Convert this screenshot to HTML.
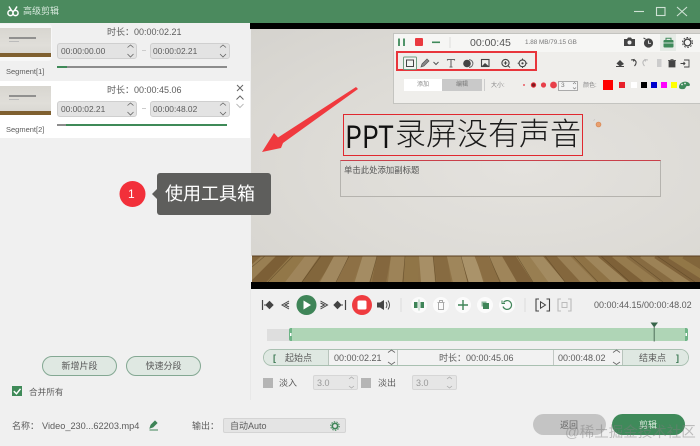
<!DOCTYPE html>
<html lang="zh"><head><meta charset="utf-8"><title>高级剪辑</title>
<style>
html,body{margin:0;padding:0}
body{width:700px;height:446px;position:relative;overflow:hidden;background:#f0f0f0;font-family:"Liberation Sans","Noto Sans CJK SC",sans-serif;color:#555}
.a{position:absolute;box-sizing:border-box}
.t{position:absolute;white-space:nowrap;line-height:12px;font-size:9px;color:#5c5c5c}
.inp{position:absolute;box-sizing:border-box;background:#e3e3e3;border:1px solid #cfcfcf;border-radius:3px;height:16px;width:80px}
.thumb{position:absolute;left:0;width:51px;height:29px;background:linear-gradient(#d8d6d0 0,#e0ded9 60%,#dad8d3 86%,#7e5f30 86%,#80602f 100%);overflow:hidden}
.thumb i{position:absolute;left:9px;top:9px;width:27px;height:2px;background:#777;opacity:.75}
.thumb b{position:absolute;left:9px;top:13px;width:10px;height:1px;background:#bbb}
.btn{position:absolute;box-sizing:border-box;height:20px;width:75px;top:356px;border:1px solid #84a893;border-radius:10px;background:#dfe8e2;font-size:9px;line-height:18px;text-align:center;color:#555;font-weight:400}
svg{position:absolute;left:0;top:0}
</style></head><body>

<div class="a" style="left:0;top:0;width:700px;height:23px;background:#4b8a5e"></div>
<div class="t" style="left:23px;top:5px;color:#d9eadf;font-size:9px">高级剪辑</div>

<!-- left segments -->
<div class="a" style="left:0;top:24px;width:52px;height:37px;background:#f7f7f7;border-radius:0 4px 4px 0"></div>
<div class="a" style="left:0;top:81px;width:250px;height:57px;background:#fff"></div>
<div class="thumb" style="top:28px"><i></i><b></b></div>
<div class="thumb" style="top:86px"><i></i><b></b></div>
<div class="t" style="left:6px;top:66px;font-size:7.5px">Segment[1]</div>
<div class="t" style="left:6px;top:124px;font-size:7.5px">Segment[2]</div>
<div class="t" style="left:107px;top:26px;font-size:9px">时长：00:00:02.21</div>
<div class="t" style="left:107px;top:84px;font-size:9px">时长：00:00:45.06</div>
<div class="inp" style="left:57px;top:43px"></div><div class="inp" style="left:150px;top:43px"></div>
<div class="inp" style="left:57px;top:101px"></div><div class="inp" style="left:150px;top:101px"></div>
<div class="t" style="left:61px;top:45px;font-size:8.4px">00:00:00.00</div>
<div class="t" style="left:153px;top:45px;font-size:8.4px">00:00:02.21</div>
<div class="t" style="left:61px;top:103px;font-size:8.4px">00:00:02.21</div>
<div class="t" style="left:153px;top:103px;font-size:8.4px">00:00:48.02</div>
<div class="a" style="left:142px;top:50px;width:4px;height:1px;background:#ccc"></div>
<div class="a" style="left:142px;top:108px;width:4px;height:1px;background:#ccc"></div>
<div class="a" style="left:57px;top:66px;width:170px;height:2px;background:#8c8c8c"></div>
<div class="a" style="left:57px;top:66px;width:10px;height:2px;background:#3f8a58"></div>
<div class="a" style="left:57px;top:124px;width:170px;height:2px;background:#3f8a58"></div>
<div class="a" style="left:57px;top:124px;width:9px;height:2px;background:#8c8c8c"></div>

<div class="btn" style="left:42px">新增片段</div>
<div class="btn" style="left:126px">快速分段</div>
<div class="a" style="left:12px;top:386px;width:10px;height:10px;background:#3f8a58"></div>
<div class="t" style="left:29px;top:386px;font-size:8.6px">合并所有</div>

<div class="t" style="left:12px;top:420px;font-size:9px">名称：</div>
<div class="t" style="left:42px;top:420px;font-size:9.2px">Video_230...62203.mp4</div>
<div class="t" style="left:192px;top:420px;font-size:9px">输出：</div>
<div class="a" style="left:223px;top:418px;width:123px;height:15px;background:#e4e4e4;border:1px solid #d4d4d4;border-radius:2px"></div>
<div class="t" style="left:230px;top:420px;font-size:9px">自动Auto</div>

<!-- preview -->
<div class="a" style="left:250px;top:23px;width:450px;height:6px;background:#000"></div>
<div class="a" style="left:251px;top:29px;width:449px;height:227px;background:radial-gradient(ellipse at 60% 60%,#e4e2de 0,#dddbd6 55%,#d5d3ce 100%)"></div>
<div class="a" style="left:250px;top:29px;width:1px;height:253px;background:#eee"></div>
<div class="a" style="left:251px;top:282px;width:449px;height:7px;background:#000"></div>
<div class="a" style="left:250px;top:289px;width:1px;height:111px;background:#e8e8e8"></div>

<div class="a" style="left:343px;top:114px;width:240px;height:42px;border:1px solid #e0282f"></div>
<div class="t" style="left:345px;top:116px;height:38px;line-height:38px;font-size:31px;color:#111;font-family:'Noto Sans CJK SC',sans-serif;transform-origin:0 50%;transform:scaleX(.86)">PPT</div>
<div class="t" style="left:395px;top:116px;height:38px;line-height:38px;font-size:31px;color:#1a1a1a;font-weight:300">录屏没有声音</div>
<div class="a" style="left:340px;top:160px;width:321px;height:37px;border:1px solid #b5b3ae;border-top:1px solid #c9404a"></div>
<div class="t" style="left:344px;top:164px;font-size:8.4px;color:#555">单击此处添加副标题</div>

<!-- recorder toolbar -->
<div class="a" style="left:393px;top:33px;width:307px;height:71px;background:#efeeeb;border:1px solid #c4c4c0;border-right:0"></div>
<div class="a" style="left:394px;top:34px;width:306px;height:18px;background:#f6f6f4"></div>
<div class="a" style="left:660px;top:34px;width:16px;height:17px;background:#e6ebe6"></div>
<div class="t" style="left:470px;top:37px;font-size:10.5px;color:#555">00:00:45</div>
<div class="t" style="left:525px;top:37px;font-size:6.3px;color:#777">1.88 MB/79.15 GB</div>
<div class="a" style="left:396px;top:51px;width:141px;height:20px;border:2px solid #e8353b"></div>
<div class="a" style="left:404px;top:79px;width:38px;height:12px;background:#fff"></div>
<div class="a" style="left:442px;top:79px;width:40px;height:12px;background:#c9c9c9"></div>
<div class="t" style="left:417px;top:79px;font-size:6px;color:#888">添加</div>
<div class="t" style="left:456px;top:79px;font-size:6px;color:#777">编辑</div>
<div class="a" style="left:484px;top:79px;width:1px;height:12px;background:#ccc"></div>
<div class="t" style="left:491px;top:80px;font-size:6px;color:#888">大小:</div>
<div class="a" style="left:558px;top:81px;width:20px;height:10px;background:#f4f4f4;border:1px solid #aaa"></div>
<div class="t" style="left:561px;top:80px;font-size:6.5px;color:#777">3</div>
<div class="t" style="left:583px;top:80px;font-size:6px;color:#888">颜色:</div>
<div class="a" style="left:603px;top:80px;width:10px;height:10px;background:#f00"></div>
<div class="a" style="left:619px;top:82px;width:6px;height:6px;background:#e8202a"></div>
<div class="a" style="left:631px;top:82px;width:6px;height:6px;background:#fff"></div>
<div class="a" style="left:641px;top:82px;width:6px;height:6px;background:#000"></div>
<div class="a" style="left:651px;top:82px;width:6px;height:6px;background:#00c"></div>
<div class="a" style="left:661px;top:82px;width:6px;height:6px;background:#f0f"></div>
<div class="a" style="left:671px;top:82px;width:6px;height:6px;background:#ff0"></div>

<!-- right lower -->
<div class="t" style="left:594px;top:299px;font-size:9px">00:00:44.15/00:00:48.02</div>
<div class="a" style="left:267px;top:329px;width:24px;height:12px;background:#dedede"></div>
<div class="a" style="left:289px;top:328px;width:399px;height:13px;background:#afd5b6;border-left:3px solid #6fb487;border-right:3px solid #6fb487;border-radius:2px"></div>

<div class="a" style="left:263px;top:349px;width:426px;height:17px;border:1px solid #a9c0b1;border-radius:9px;background:#f2f2f2;overflow:hidden">
  <div class="a" style="left:0;top:0;width:65px;height:15px;background:#dfe8e2;border-right:1px solid #b8c4bc"></div>
  <div class="a" style="left:133px;top:0;width:1px;height:15px;background:#c2c8c4"></div>
  <div class="a" style="left:289px;top:0;width:1px;height:15px;background:#c2c8c4"></div>
  <div class="a" style="left:358px;top:0;width:67px;height:15px;background:#dfe8e2;border-left:1px solid #b8c4bc"></div>
</div>
<div class="t" style="left:273px;top:352px;font-size:9px;color:#3f7a55;font-weight:700">[</div>
<div class="t" style="left:285px;top:352px;font-size:9px">起始点</div>
<div class="t" style="left:334px;top:352px;font-size:9px">00:00:02.21</div>
<div class="t" style="left:439px;top:352px;font-size:9px">时长：00:00:45.06</div>
<div class="t" style="left:558px;top:352px;font-size:9px">00:00:48.02</div>
<div class="t" style="left:639px;top:352px;font-size:9px">结束点</div>
<div class="t" style="left:676px;top:352px;font-size:9px;color:#3f7a55;font-weight:700">]</div>

<div class="a" style="left:263px;top:378px;width:10px;height:10px;background:#b5b5b5"></div>
<div class="t" style="left:279px;top:377px;font-size:9px">淡入</div>
<div class="a" style="left:313px;top:375px;width:45px;height:15px;background:#e6e6e6;border:1px solid #d6d6d6;border-radius:2px"></div>
<div class="t" style="left:317px;top:377px;font-size:9px;color:#999">3.0</div>
<div class="a" style="left:361px;top:378px;width:10px;height:10px;background:#b5b5b5"></div>
<div class="t" style="left:378px;top:377px;font-size:9px">淡出</div>
<div class="a" style="left:412px;top:375px;width:45px;height:15px;background:#e6e6e6;border:1px solid #d6d6d6;border-radius:2px"></div>
<div class="t" style="left:416px;top:377px;font-size:9px;color:#999">3.0</div>

<div class="a" style="left:533px;top:414px;width:73px;height:21px;background:#c4c4c4;border-radius:11px"></div>
<div class="a" style="left:612px;top:414px;width:73px;height:21px;background:#3f8a5a;border-radius:11px"></div>
<div class="t" style="left:560px;top:419px;font-size:9px;color:#666">返回</div>
<div class="t" style="left:639px;top:419px;font-size:9px;color:#dcecdf">剪辑</div>
<div class="t" style="left:565px;top:425px;font-size:14.5px;line-height:16px;color:rgba(125,125,125,.45)">@稀土掘金技术社区</div>

<svg width="700" height="446" viewBox="0 0 700 446" fill="none">
  <defs><clipPath id="wc"><rect x="252" y="256" width="448" height="26"/></clipPath></defs>
  <!-- logo -->
  <g stroke="#fff" stroke-width="1.5"><circle cx="10.5" cy="13" r="2.6"/><circle cx="15.5" cy="13" r="2.6"/><path d="M9 6.5 L11.5 10.5M17 6.5 L14.5 10.5"/></g>
  <!-- window controls -->
  <g stroke="#cfe2d5" stroke-width="1.1"><path d="M634 11.5H644"/><rect x="656.5" y="7.5" width="8.5" height="8"/><path d="M677 7L687 16M687 7L677 16"/></g>

  <!-- spin chevrons, left -->
  <g stroke="#666" stroke-width=".8">
    <path d="M127.5 47.5L130.5 45L133.5 47.5M127.5 54L130.5 57L133.5 54M220 47.5L223 45L226 47.5M220 54L223 57L226 54"/>
    <path d="M127.5 105.5L130.5 103L133.5 105.5M127.5 112L130.5 115L133.5 112M220 105.5L223 103L226 105.5M220 112L223 115L226 112"/>
    <path d="M237 85L243 91M243 85L237 91" stroke-width="1"/>
    <path d="M236.5 99.5L240 96L243.5 99.5" stroke-width="1"/>
    <path d="M236.5 104L240 107.5L243.5 104" stroke="#bbb" stroke-width="1"/>
    <path d="M388 352.5L391.5 350L395 352.5M388 362L391.5 364.5L395 362M613 352.5L616.5 350L620 352.5M613 362L616.5 364.5L620 362"/>
    <path d="M349 379L351.5 377L354 379M349 386L351.5 388L354 386M447 379L449.5 377L452 379M447 386L449.5 388L452 386" stroke="#aaa"/>
  </g>

  <!-- recorder row 1 -->
  <path d="M399 38.5V46M404 38.5V46" stroke="#3f8a5a" stroke-width="1.8"/>
  <rect x="415" y="38" width="8" height="8" rx="1" fill="#ea3a40"/>
  <path d="M432 42.3H440" stroke="#3f8a5a" stroke-width="1.6"/>
  <path d="M450 37V48" stroke="#ddd"/>
  <path d="M624 39h3l1-1.5h3l1 1.5h3v7h-11z" fill="#444"/><circle cx="629.5" cy="42.5" r="2" fill="#eee"/>
  <circle cx="648.5" cy="43" r="4.6" fill="#444"/><path d="M648.5 40.5V43.3H651" stroke="#eee" stroke-width=".9"/><path d="M643.5 38L645.5 39" stroke="#444"/>
  <rect x="663.5" y="40" width="10" height="7.5" rx="1" fill="#3f8a5a"/><path d="M666 40V38.3H671V40" stroke="#3f8a5a"/><path d="M663.5 43H673.5" stroke="#eee" stroke-width=".8"/>
  <circle cx="687.5" cy="42.5" r="3.4" stroke="#444" stroke-width="1.4"/><circle cx="687.5" cy="42.5" r="5" stroke="#444" stroke-width="1" stroke-dasharray="1.6 1.6"/>

  <!-- recorder row 2 -->
  <rect x="403.5" y="57" width="13" height="12.5" rx="1" stroke="#6f9c80" fill="#f3f4f2"/>
  <rect x="406.5" y="60" width="7" height="6.5" stroke="#444"/>
  <path d="M421 67L422 64L427 59L429 61L424 66Z" stroke="#555" fill="#888" stroke-width=".7"/>
  <path d="M433.5 62L436 64.5L438.5 62" stroke="#555"/>
  <path d="M447.5 60.5V59.5H454.5V60.5M451 59.5V67M449.5 67H452.5" stroke="#666" stroke-width="1.1"/>
  <circle cx="467" cy="63.5" r="3.8" fill="#444"/><path d="M469 59.6a3.8 3.8 0 0 1 0 7.8" stroke="#666"/>
  <rect x="481.5" y="59.5" width="7.5" height="7" stroke="#444" stroke-width="1.1"/><path d="M482 66L485 63L488.5 66Z" fill="#444"/>
  <circle cx="505.5" cy="63" r="3.6" stroke="#444" stroke-width="1.1"/><path d="M503.8 63H507.2M505.5 61.3V64.7M508 65.7L510 67.5" stroke="#444"/>
  <circle cx="522.5" cy="63.3" r="3.4" stroke="#444" stroke-width="1.1"/><circle cx="522.5" cy="63.3" r="1.1" fill="#444"/><path d="M522.5 58.5V60M522.5 66.5V68M517.7 63.3H519.2M525.8 63.3H527.3" stroke="#444"/>
  <path d="M620 60L624 64L620 66.5L616.5 63.5Z" fill="#444"/><path d="M616 66.5H624" stroke="#444"/>
  <path d="M631 60L634 59.5L633.5 61.5M632 59.8C636 59.5 637.5 62.5 634.5 66" stroke="#444" stroke-width="1.1"/>
  <path d="M648 60L645 59.5L645.5 61.5M647 59.8C643 59.5 641.5 62.5 644.5 66" stroke="#bbb" stroke-width="1.1"/>
  <rect x="657" y="59" width="4.5" height="8" fill="#ccc"/>
  <path d="M669 61H675V67H669ZM668 60.5H676M670.5 59.5H673.5" stroke="#444" fill="#444" stroke-width=".8"/>
  <path d="M684 60H689V67H684M680.5 63.5H685M683.5 62L685 63.5L683.5 65" stroke="#444" stroke-width=".9"/>

  <!-- recorder row 3 -->
  <circle cx="524" cy="85" r=".9" fill="#e8303a"/>
  <circle cx="533.5" cy="85" r="2.2" fill="#7a1c22" stroke="#e8303a"/>
  <circle cx="543.5" cy="85" r="2.6" fill="#e8404a"/>
  <circle cx="553.5" cy="85" r="3.4" fill="#e8404a"/>
  <path d="M573 84L574.5 82.5L576 84M573 87.5L574.5 89L576 87.5" stroke="#777" stroke-width=".6"/>
  <path d="M679 87C679 82 686 80 689 83C691 85 689.5 86.5 687.5 86C685.5 85.7 686 88.5 684 89C681.5 89.5 679 89 679 87Z" fill="#3f8a5a"/>
  <circle cx="682" cy="84.5" r=".9" fill="#eee"/><circle cx="685" cy="83.5" r=".9" fill="#eee"/>

  <!-- arrow -->
  <path d="M262 152L274 133L278 137.5L356 87L358 89L283 143L281 148Z" fill="#f0393e"/>
  <!-- orange mark -->
  <circle cx="598.5" cy="124.5" r="2.4" fill="#e8a070" stroke="#d98a58" stroke-width=".8"/>
  <path d="M593.5 120.5L595 119.5" stroke="#bbb" stroke-width=".7"/>

  <!-- wood -->
  <rect x="252" y="256" width="448" height="26" fill="#8f7347"/>
  <g clip-path="url(#wc)">
    <g stroke-width="14" stroke-linecap="square" opacity=".8">
      <path d="M258 256L226 282" stroke="#7f6238"/><path d="M272 256L242 282" stroke="#9c8257"/>
      <path d="M286 256L260 282" stroke="#785b33"/><path d="M300 256L276 282" stroke="#937849"/>
      <path d="M314 256L294 282" stroke="#a38a60"/><path d="M328 256L310 282" stroke="#80633a"/>
      <path d="M342 256L328 282" stroke="#a68e65"/><path d="M356 256L345 282" stroke="#8d7045"/>
      <path d="M370 256L362 282" stroke="#aa936a"/><path d="M384 256L379 282" stroke="#82653c"/>
      <path d="M398 256L395 282" stroke="#a1885d"/><path d="M412 256L411 282" stroke="#917648"/>
      <path d="M426 256L428 282" stroke="#ad976e"/><path d="M440 256L444 282" stroke="#866a40"/>
      <path d="M454 256L460 282" stroke="#a48b60"/><path d="M468 256L476 282" stroke="#b19b73"/>
      <path d="M482 256L492 282" stroke="#8b6e43"/><path d="M496 256L509 282" stroke="#a38a5f"/>
      <path d="M510 256L525 282" stroke="#7c5f37"/><path d="M524 256L541 282" stroke="#9b8154"/>
      <path d="M538 256L557 282" stroke="#a99168"/><path d="M552 256L574 282" stroke="#82653b"/>
      <path d="M566 256L590 282" stroke="#9e855a"/><path d="M580 256L606 282" stroke="#8e7245"/>
      <path d="M594 256L622 282" stroke="#a48b60"/><path d="M608 256L639 282" stroke="#7a5d35"/>
      <path d="M622 256L655 282" stroke="#987d50"/><path d="M636 256L671 282" stroke="#866a40"/>
      <path d="M650 256L687 282" stroke="#a0865a"/><path d="M664 256L703 282" stroke="#7c5f37"/>
      <path d="M678 256L719 282" stroke="#937848"/><path d="M692 256L735 282" stroke="#806339"/>
    </g>
    <g stroke="#4f3a1d" stroke-width=".6" opacity=".55">
      <path d="M265 256L234 282M293 256L268 282M321 256L302 282M349 256L336 282M377 256L370 282M405 256L403 282M433 256L436 282M461 256L468 282M489 256L500 282M517 256L533 282M545 256L565 282M573 256L598 282M601 256L630 282M629 256L663 282M657 256L695 282"/>
    </g>
  </g>
  <rect x="252" y="255.500" width="448" height="1" fill="#5a3f20"/>

  <!-- tooltip -->
  <circle cx="132.5" cy="194" r="13" fill="#f2303a"/>
  <path d="M157 189L152 194L157 199Z" fill="#5e5e5c"/>
  <rect x="157" y="173" width="114" height="42" rx="3" fill="#5e5e5c"/>

  <!-- player controls -->
  <g fill="#444" stroke="#444">
    <path d="M262.5 300V310" stroke-width="1.2"/><path d="M264 305H266M266 305L269.5 301.5L273 305L269.5 308.5Z"/>
    <path d="M289 301L282 305L289 309M289 303L285 305L289 307" fill="none" stroke-width="1"/>
    <path d="M320.5 301L327.5 305L320.5 309M320.5 303L324.5 305L320.5 307" fill="none" stroke-width="1"/>
    <path d="M345.5 300V310" stroke-width="1.2"/><path d="M343 305H341M341 305L337.5 301.5L334 305L337.5 308.5Z"/>
    <rect x="377" y="302.5" width="3" height="5" stroke="none"/><path d="M380 302.5L384 300V310L380 307.5Z" stroke="none"/>
    <path d="M386 302C387.3 304 387.3 306 386 308M388 300.5C390 303.500 390 306.500 388 309.500" fill="none" stroke-width=".9"/>
  </g>
  <circle cx="306.5" cy="305" r="10" fill="#3f8558"/><path d="M303.500 300.500L311 305L303.500 309.500Z" fill="#fff"/>
  <circle cx="362" cy="305" r="10" fill="#ef3b3f"/><rect x="357.500" y="300.500" width="9" height="9" rx="1.500" fill="#fff"/>
  <path d="M401 298V312M525 298V312" stroke="#ddd"/>
  <g fill="#fbfbfb"><circle cx="419" cy="305" r="8"/><circle cx="441" cy="305" r="8"/><circle cx="463" cy="305" r="8"/><circle cx="485" cy="305" r="8"/><circle cx="507" cy="305" r="8"/></g>
  <path d="M414 302H417.500V308H414ZM420.500 302H424V308H420.500Z" fill="#3f8558"/><path d="M419 299.500V310.500" stroke="#a8c9b4"/>
  <path d="M437.500 302.500H444.500M438.500 303V309.500H443.500V303M439.500 302V300.500H442.500V302" stroke="#aaa" stroke-width="1"/>
  <path d="M458 305H468M463 300V310" stroke="#3f8558" stroke-width="1.400"/>
  <rect x="481.500" y="301.500" width="5" height="5" fill="#8ab49a"/><rect x="483" y="303" width="6" height="6" fill="#3f8558"/>
  <path d="M503.500 302.500A4.400 4.400 0 1 1 503 306.500" stroke="#3f8558" stroke-width="1.200"/><path d="M502 300.500V303.500H505" stroke="#3f8558"/>
  <path d="M539 299H536V311H539M546.500 299H549.500V311H546.500" stroke="#444" stroke-width="1.100"/><path d="M540.500 301.800L545.500 305L540.500 308.200Z" stroke="#444"/>
  <path d="M561 299H558V311H561M568 299H571V311H568" stroke="#bbb" stroke-width="1.100"/><rect x="562" y="302.500" width="5" height="5" stroke="#bbb"/>

  <!-- timeline extras -->
  <rect x="290" y="333" width="1.500" height="3" fill="#fff"/><rect x="685.500" y="333" width="1.500" height="3" fill="#fff"/>
  <path d="M650.500 322.500H658L654.200 327.500Z" fill="#37654a"/><path d="M654.200 327V341.500" stroke="#4f6f5b"/>

  <!-- bottom icons -->
  <path d="M13.800 391.200L16.500 393.800L20.500 388.800" stroke="#fff" stroke-width="1.500"/>
  <path d="M150 428L151 425L155 421L157 423L153 427ZM149.500 430H158" stroke="#3f8558" fill="#3f8558" stroke-width=".9"/>
  <circle cx="335" cy="426" r="2.700" stroke="#3f8558" stroke-width="1.700"/><circle cx="335" cy="426" r="4.300" stroke="#3f8558" stroke-width="1" stroke-dasharray="1.400 1.300"/>
</svg>

<div class="t" style="left:165px;top:183px;line-height:22px;font-size:18px;color:#fff">使用工具箱</div>
<div class="t" style="left:128px;top:187px;line-height:14px;font-size:12px;color:#fff">1</div>

</body></html>
